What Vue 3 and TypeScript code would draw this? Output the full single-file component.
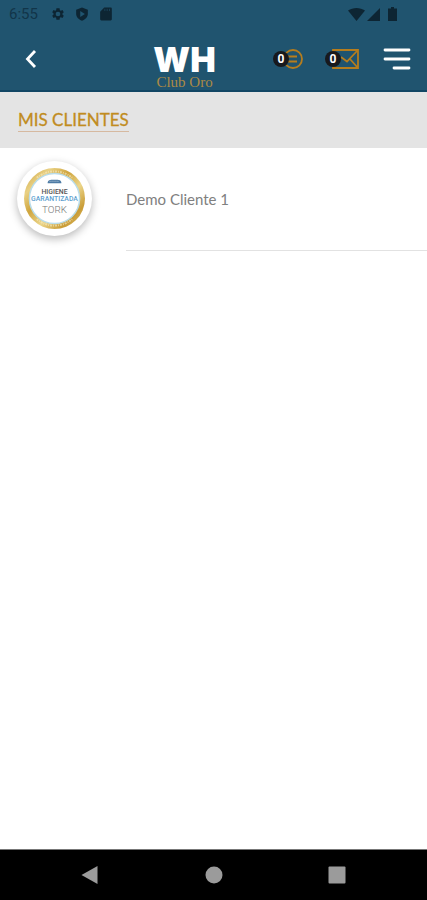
<script setup lang="ts">
interface Client {
  id: number
  name: string
}

const clients: Client[] = [{ id: 1, name: 'Demo Cliente 1' }]
const pendingMessages = 0
const pendingMails = 0
</script>

<template>
  <div class="screen">
    <header class="top">
      <div class="status">
        <span class="time">6:55</span>
        <div class="status-left">
          <svg width="14" height="14" viewBox="0 0 24 24" aria-hidden="true">
            <path
              fill-rule="evenodd"
              d="M19.6 13c.1-.6.1-1.400 0-2l2.300-1.800-2.200-3.900-2.800 1.100c-.5-.4-1.100-.7-1.700-1L14.700 2H9.300l-.5 3.400c-.6.3-1.200.6-1.700 1L4.300 5.300 2.100 9.200 4.400 11c-.1.6-.1 1.400 0 2l-2.300 1.800 2.200 3.900 2.800-1.100c.5.400 1.100.7 1.700 1l.5 3.400h5.400l.5-3.400c.6-.3 1.200-.6 1.700-1l2.800 1.100 2.200-3.900zM12 16a4 4 0 1 1 0-8 4 4 0 0 1 0 8z"
            />
          </svg>
          <svg width="14" height="14" viewBox="0 0 24 24" aria-hidden="true">
            <path fill-rule="evenodd" d="M12 1 2 4.500V12c0 5 4 9.500 10 11.500C18 21.500 22 17 22 12V4.500zM9 7l8 5-8 5z" />
          </svg>
          <svg width="14" height="14" viewBox="0 0 24 24" aria-hidden="true">
            <path fill-rule="evenodd" d="M9 1h11a2 2 0 0 1 2 2v18a2 2 0 0 1-2 2H4a2 2 0 0 1-2-2V8z" />
            <path class="pins" d="M10 3v4M14 3v4M18 3v4" />
          </svg>
        </div>
        <div class="status-right">
          <svg width="17" height="14" viewBox="0 0 17 14" aria-hidden="true">
            <path d="M8.500 14 0 3.500C5 0 12 0 17 3.500z" />
          </svg>
          <svg width="13" height="13" viewBox="0 0 13 13" aria-hidden="true">
            <path d="M13 0v13H0z" />
          </svg>
          <svg class="battery" width="9" height="14" viewBox="0 0 9 14" aria-hidden="true">
            <path d="M3 0h3v1.500h3V14H0V1.500h3z" />
          </svg>
        </div>
      </div>

      <div class="bar">
        <button class="back" type="button" aria-label="Volver">
          <svg width="12" height="20" viewBox="0 0 12 20" aria-hidden="true">
            <path d="M10 2 2.500 10l7.500 8" fill="none" stroke="#fff" stroke-width="2.800" />
          </svg>
        </button>
        <div class="brand">
          <strong>WH</strong>
          <span>Club Oro</span>
        </div>
        <nav class="actions">
          <button class="action" type="button" aria-label="Mensajes">
            <svg width="30" height="22" viewBox="0 0 30 22" aria-hidden="true">
              <g fill="none" stroke="#b67d1d" stroke-width="1.800">
                <circle cx="20" cy="11" r="9" />
                <path d="M15 8.500h9M15 13.500h9" />
              </g>
            </svg>
            <span class="count">{{ pendingMessages }}</span>
          </button>
          <button class="action" type="button" aria-label="Correo">
            <svg width="34" height="22" viewBox="0 0 34 22" aria-hidden="true">
              <g fill="none" stroke="#b67d1d" stroke-width="1.800">
                <path d="M8 2h25v18H8zM32.500 2.500 22 13.500 16 9M25 11l7.500 8.500" />
              </g>
            </svg>
            <span class="count">{{ pendingMails }}</span>
          </button>
          <button class="menu" type="button" aria-label="Menú">
            <svg width="28" height="24" viewBox="0 0 28 24" aria-hidden="true">
              <path d="M2 3h24M2 12h24M11 21h15" stroke="#fff" stroke-width="2.800" stroke-linecap="round" />
            </svg>
          </button>
        </nav>
      </div>
    </header>

    <div class="heading">
      <h1>MIS CLIENTES</h1>
    </div>

    <main class="content">
      <ul class="clients">
        <li v-for="client in clients" :key="client.id">
          <a href="#" class="client">
            <span class="avatar">
              <svg viewBox="0 0 62 62" aria-hidden="true">
                <defs>
                  <linearGradient id="gold" x1="0" y1="0" x2="1" y2="1">
                    <stop offset="0" stop-color="#c89b35" />
                    <stop offset="0.220" stop-color="#e9d184" />
                    <stop offset="0.400" stop-color="#cfa53e" />
                    <stop offset="0.600" stop-color="#ecd68a" />
                    <stop offset="0.800" stop-color="#c99c36" />
                    <stop offset="1" stop-color="#e6cb78" />
                  </linearGradient>
                </defs>
                <circle cx="31" cy="31" r="31" fill="url(#gold)" />
                <path
                  d="M13 10a28 28 0 0 1 36 0M13 52a28 28 0 0 0 36 0"
                  fill="none"
                  stroke="#f6ebc4"
                  stroke-width="2"
                  stroke-dasharray="2 1 1 1"
                  opacity="0.600"
                />
                <circle cx="31" cy="31" r="25.500" fill="#fff" stroke="#b9dcea" stroke-width="1.500" />
                <path d="M24 15.500c0-3 2-3.500 7-3.500s7 .5 7 3.500z" fill="#4e7ba5" />
                <path d="M26 13.500h10" stroke="#b9cbdc" stroke-width="1" stroke-dasharray="1 1" />
                <g text-anchor="middle" class="seal-text">
                  <text x="31" y="26" font-size="7" fill="#555">HIGIENE</text>
                  <text x="31" y="34" font-size="7" fill="#5e9fd0">GARANTIZADA</text>
                  <text x="31" y="46" font-size="10" fill="#777" class="thin">TORK</text>
                </g>
              </svg>
            </span>
            <span class="name">{{ client.name }}</span>
          </a>
        </li>
      </ul>
    </main>

    <footer class="system-nav">
      <button type="button" aria-label="Atrás">
        <svg width="18" height="20" viewBox="0 0 18 20" aria-hidden="true">
          <path d="M16.500 1v18L0.500 10z" />
        </svg>
      </button>
      <button type="button" aria-label="Inicio">
        <svg width="18" height="20" viewBox="0 0 18 20" aria-hidden="true">
          <circle cx="9" cy="10" r="8.500" />
        </svg>
      </button>
      <button type="button" aria-label="Recientes">
        <svg width="18" height="20" viewBox="0 0 18 20" aria-hidden="true">
          <rect x="0.500" y="1.500" width="17" height="17" rx="1" />
        </svg>
      </button>
    </footer>
  </div>
</template>

<style>
body {
  background: #fff;
}
</style>

<style scoped>
.screen {
  display: flex;
  flex-direction: column;
  min-height: 100vh;
  font-family: Lato, "Liberation Sans", sans-serif;
}

button {
  display: flex;
  align-items: center;
  padding: 0;
  border: 0;
  background: none;
  cursor: pointer;
}

svg {
  display: block;
}

.top {
  background: #20546f;
  border-bottom: 2px solid #114664;
}

.status {
  display: flex;
  align-items: center;
  height: 28px;
  padding: 0 30px 0 9px;
  fill: #0d2533;
}

.time {
  color: #123549;
  font-family: Roboto, sans-serif;
  font-size: 15px;
}

.status-left {
  display: flex;
  gap: 10px;
  margin-left: 13px;
}

.pins {
  stroke: #20546f;
  stroke-width: 1;
}

.status-right {
  display: flex;
  align-items: center;
  gap: 2px;
  margin-left: auto;
}

.battery {
  margin-left: 6px;
}

.bar {
  display: flex;
  align-items: center;
  height: 62px;
  padding-right: 16px;
}

.back {
  width: 96px;
  height: 48px;
  padding-left: 25px;
}

.brand {
  display: flex;
  flex: 1;
  flex-direction: column;
  align-items: center;
  padding-top: 16px;
}

.brand strong {
  color: #fff;
  font-family: Inter, sans-serif;
  font-size: 34px;
  font-weight: 900;
  line-height: 30px;
}

.brand span {
  color: #ad8a45;
  font-family: "Liberation Serif", serif;
  font-size: 15px;
  line-height: 14px;
}

.actions {
  display: flex;
  align-items: center;
  gap: 22px;
}

.action {
  position: relative;
}

.menu {
  margin-left: 2px;
}

.count {
  position: absolute;
  top: 3px;
  left: 0;
  width: 16px;
  border-radius: 50%;
  background: #17191d;
  color: #fff;
  font-family: Roboto, sans-serif;
  font-size: 12px;
  font-weight: 700;
  line-height: 16px;
  text-align: center;
}

.heading {
  display: flex;
  height: 56px;
  padding: 0 18px;
  align-items: center;
  background: #e4e4e4;
}

.heading h1 {
  margin: 0;
  border-bottom: 1px solid #d6b9a0;
  color: #c18c1f;
  font-size: 17px;
  font-weight: 400;
  line-height: 23px;
  -webkit-text-stroke: 0.3px #c18c1f;
}

.content {
  flex: 1;
}

.clients {
  margin: 0;
  padding: 0;
  list-style: none;
}

.client {
  display: flex;
  height: 103px;
  padding-left: 17px;
  color: #808080;
  text-decoration: none;
}

.avatar {
  flex: none;
  box-sizing: border-box;
  width: 75px;
  height: 75px;
  margin: 13px 34px 0 0;
  padding: 7px;
  border-radius: 50%;
  background: #fff;
  box-shadow: 0 3px 8px rgba(0, 0, 0, 0.28);
}

.seal-text {
  font-family: Roboto, sans-serif;
  font-weight: 500;
}

.thin {
  font-weight: 300;
}

.name {
  flex: 1;
  border-bottom: 1px solid #e2e2e2;
  font-size: 15px;
  line-height: 102px;
}

.system-nav {
  display: flex;
  justify-content: space-between;
  padding: 0 81px;
  border-top: 1px solid #777;
  background: #000;
  fill: #9b9b9b;
}

.system-nav button {
  height: 50px;
}
</style>
